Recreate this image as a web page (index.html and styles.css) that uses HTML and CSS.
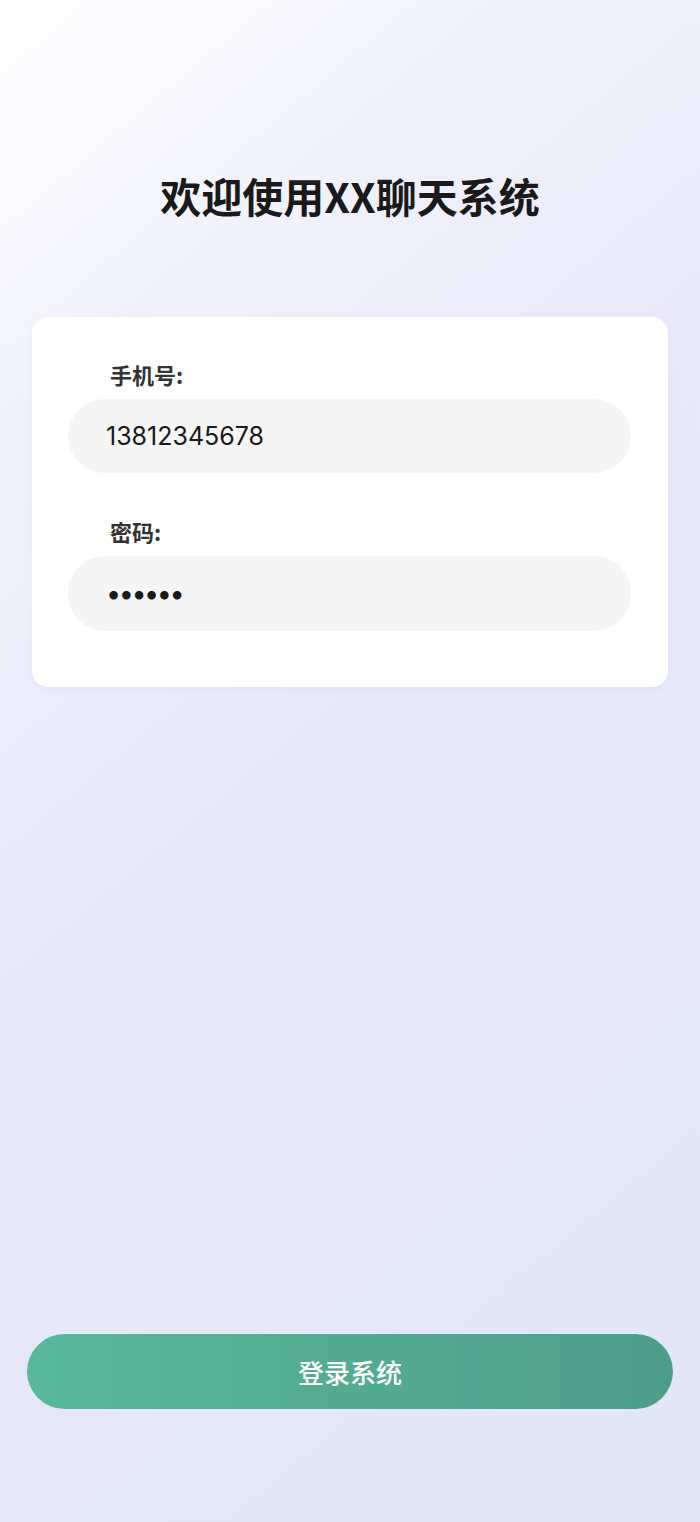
FILE: index.html
```html
<!DOCTYPE html>
<html lang="zh-CN">
<head>
  <meta charset="UTF-8">
  <meta name="viewport" content="width=device-width, initial-scale=1.0">
  <title>登录 - XX聊天系统</title>
  <link rel="stylesheet" href="styles.css">
</head>
<body>
  <div class="page">
    <h1 class="title">欢迎使用XX聊天系统</h1>

    <form class="login-card">
      <label class="field-label" for="phone">手机号:</label>
      <input class="field-input" id="phone" type="text" value="13812345678" readonly>

      <label class="field-label" for="password">密码:</label>
      <input class="field-input password" id="password" type="password" value="123456" readonly>
    </form>

    <button class="login-button" type="button">登录系统</button>
  </div>
</body>
</html>
```

FILE: styles.css
```css
/* base */
body {
  margin: 0;
  padding: 0;
  font-family: "Noto Sans CJK SC", "Noto Sans", sans-serif;
  background: linear-gradient(140deg, #ffffff 0%, #f2f2fc 20%, #e8e8fa 45%, #e2e6f9 100%);
  min-height: 1522px;
}

.page {
  display: flex;
  flex-direction: column;
  min-height: 1522px;
  box-sizing: border-box;
  padding-bottom: 113px;
}

.title {
  margin: 166px 0 0;
  font-size: 41px;
  line-height: 58px;
  font-weight: 700;
  color: #1a1a1a;
  text-align: center;
}

/* card with the form */
.login-card {
  margin: 93px 32px 0;
  padding: 42px 37px 56px 36px;
  background: #ffffff;
  border-radius: 16px;
  box-shadow: 0 2px 10px rgba(120, 120, 180, 0.06);
  display: flex;
  flex-direction: column;
}

.field-label {
  padding-left: 42px;
  font-size: 22px;
  line-height: 30px;
  font-weight: 700;
  color: #333333;
  margin-bottom: 10px;
}

.field-input {
  height: 74px;
  border: none;
  outline: none;
  border-radius: 37px;
  background: #f5f5f5;
  padding: 0 38px;
  font-family: "Inter", "Noto Sans", sans-serif;
  font-size: 25px;
  color: #1a1a1a;
  margin-bottom: 43px;
}

.field-input:last-child {
  margin-bottom: 0;
  height: 75px;
}

.field-input.password {
  font-size: 27px;
  letter-spacing: -2.5px;
}

/* bottom button */
.login-button {
  margin: auto 27px 0;
  height: 75px;
  border: none;
  border-radius: 38px;
  background: linear-gradient(90deg, #59b89b, #4c9e88);
  color: #ffffff;
  font-family: "Noto Sans CJK SC", sans-serif;
  font-size: 26px;
  font-weight: 500;
  cursor: pointer;
}
```
